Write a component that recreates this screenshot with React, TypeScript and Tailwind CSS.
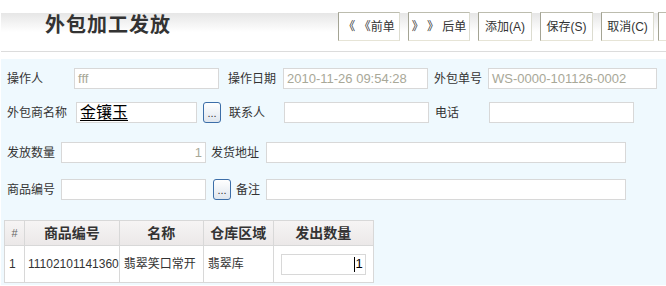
const font = "font-['Liberation_Sans','Noto_Sans_CJK_SC',sans-serif]"

const buttons = [
  { label: '《 《前单', w: 'w-[62px]' },
  { label: '》 》 后单', w: 'w-[62px]' },
  { label: '添加(A)', w: 'w-[54px]' },
  { label: '保存(S)', w: 'w-[53px]' },
  { label: '取消(C)', w: 'w-[53px]' },
  { label: '', w: 'w-[20px] ml-[-4px]' },
]

function Field({ w, value, className = '' }: { w: string; value?: string; className?: string }) {
  return (
    <div className={`${w} h-[21px] bg-white border border-[#d8d8d8] flex items-center px-[3px] text-[13px] text-[#a8a898] ${className}`}>
      {value}
    </div>
  )
}

function Label({ w, text }: { w: string; text: string }) {
  return <div className={`${w} shrink-0 text-[12px] text-[#333] leading-none`}>{text}</div>
}

function PickButton() {
  return (
    <div className="w-[18px] h-[21px] rounded-[3px] border border-[#3c6ea8] bg-[linear-gradient(to_bottom,#ffffff,#dfe6ee)] flex items-end justify-center pb-[3px] text-[11px] leading-none text-[#333] shrink-0">
      ...
    </div>
  )
}

export default function App() {
  return (
    <div className={`w-[666px] h-[286px] bg-white overflow-hidden ${font}`}>
      {/* header */}
      <div className="ml-[1px] h-[52px] border-b border-[#dcdcdc] bg-[linear-gradient(to_bottom,#fff_0,#fff_13px,#e6e6e6_13px,#fff_32px)] flex items-start">
        <h1 className="ml-[44px] mt-[12px] text-[20px] font-semibold text-[#333] tracking-[1px] leading-[26px]">外包加工发放</h1>
        <div className="ml-auto mt-[12px] flex gap-[8px] mr-[-12px]">
          {buttons.map((b, i) => (
            <div
              key={i}
              className={`${b.w} h-[29px] shrink-0 bg-white border border-l-[#a4a494] border-t-[#bcbcae] border-r-[#dcdcd0] border-b-[#e6e4d6] flex items-center justify-center text-[12px] text-[#333] whitespace-nowrap`}
            >
              {b.label}
            </div>
          ))}
        </div>
      </div>

      {/* form */}
      <div className="ml-[1px] mt-[7px] h-[226px] bg-[#eff9fe] pt-[9px]">
        <div className="flex items-center pl-[6px]">
          <Label w="w-[67px]" text="操作人" />
          <Field w="w-[145px]" value="fff" />
          <div className="w-[9px]" />
          <Label w="w-[55px]" text="操作日期" />
          <Field w="w-[145px]" value="2010-11-26 09:54:28" />
          <div className="w-[6px]" />
          <Label w="w-[54px]" text="外包单号" />
          <Field w="w-[169px]" value="WS-0000-101126-0002" />
        </div>

        <div className="flex items-center pl-[6px] mt-[13px]">
          <Label w="w-[69px]" text="外包商名称" />
          <Field w="w-[121px]" value="金镶玉" className="!text-[16px] !text-black underline underline-offset-2" />
          <div className="w-[6px]" />
          <PickButton />
          <div className="w-[8px]" />
          <Label w="w-[55px]" text="联系人" />
          <Field w="w-[145px]" />
          <div className="w-[6px]" />
          <Label w="w-[54px]" text="电话" />
          <Field w="w-[145px]" />
        </div>

        <div className="flex items-center pl-[6px] mt-[19px]">
          <Label w="w-[54px]" text="发放数量" />
          <Field w="w-[145px]" value="1" className="justify-end" />
          <div className="w-[5px]" />
          <Label w="w-[55px]" text="发货地址" />
          <Field w="w-[360px]" />
        </div>

        <div className="flex items-center pl-[6px] mt-[16px]">
          <Label w="w-[54px]" text="商品编号" />
          <Field w="w-[145px]" />
          <div className="w-[7px]" />
          <PickButton />
          <div className="w-[5px]" />
          <Label w="w-[30px]" text="备注" />
          <Field w="w-[360px]" />
        </div>

        <table className="ml-[3px] mt-[20px] border-collapse text-[12px] text-[#333]">
          <thead>
            <tr className="h-[25px] bg-[linear-gradient(to_bottom,#f6f4f4,#ebe8e8)]">
              <th className="w-[20px] border border-[#d8d8d8] font-normal text-[11px] text-[#666]">#</th>
              <th className="w-[94px] border border-[#d8d8d8] text-[14px] font-bold">商品编号</th>
              <th className="w-[84px] border border-[#d8d8d8] text-[14px] font-bold">名称</th>
              <th className="w-[70px] border border-[#d8d8d8] text-[14px] font-bold">仓库区域</th>
              <th className="w-[100px] border border-[#d8d8d8] text-[14px] font-bold">发出数量</th>
            </tr>
          </thead>
          <tbody>
            <tr className="h-[37px] bg-white">
              <td className="border border-[#d8d8d8] pl-[4px]">1</td>
              <td className="border border-[#d8d8d8] pl-[3px]">11102101141360</td>
              <td className="border border-[#d8d8d8] pl-[4px]">翡翠笑口常开</td>
              <td className="border border-[#d8d8d8] pl-[4px]">翡翠库</td>
              <td className="border border-[#d8d8d8] pl-[7px]">
                <div className="w-[85px] h-[21px] border border-[#d8d8d8] flex items-center justify-end pr-[2px] text-[13px] text-black">
                  <span className="w-px h-[15px] bg-black mr-[1px]" />1
                </div>
              </td>
            </tr>
          </tbody>
        </table>
      </div>
    </div>
  )
}
